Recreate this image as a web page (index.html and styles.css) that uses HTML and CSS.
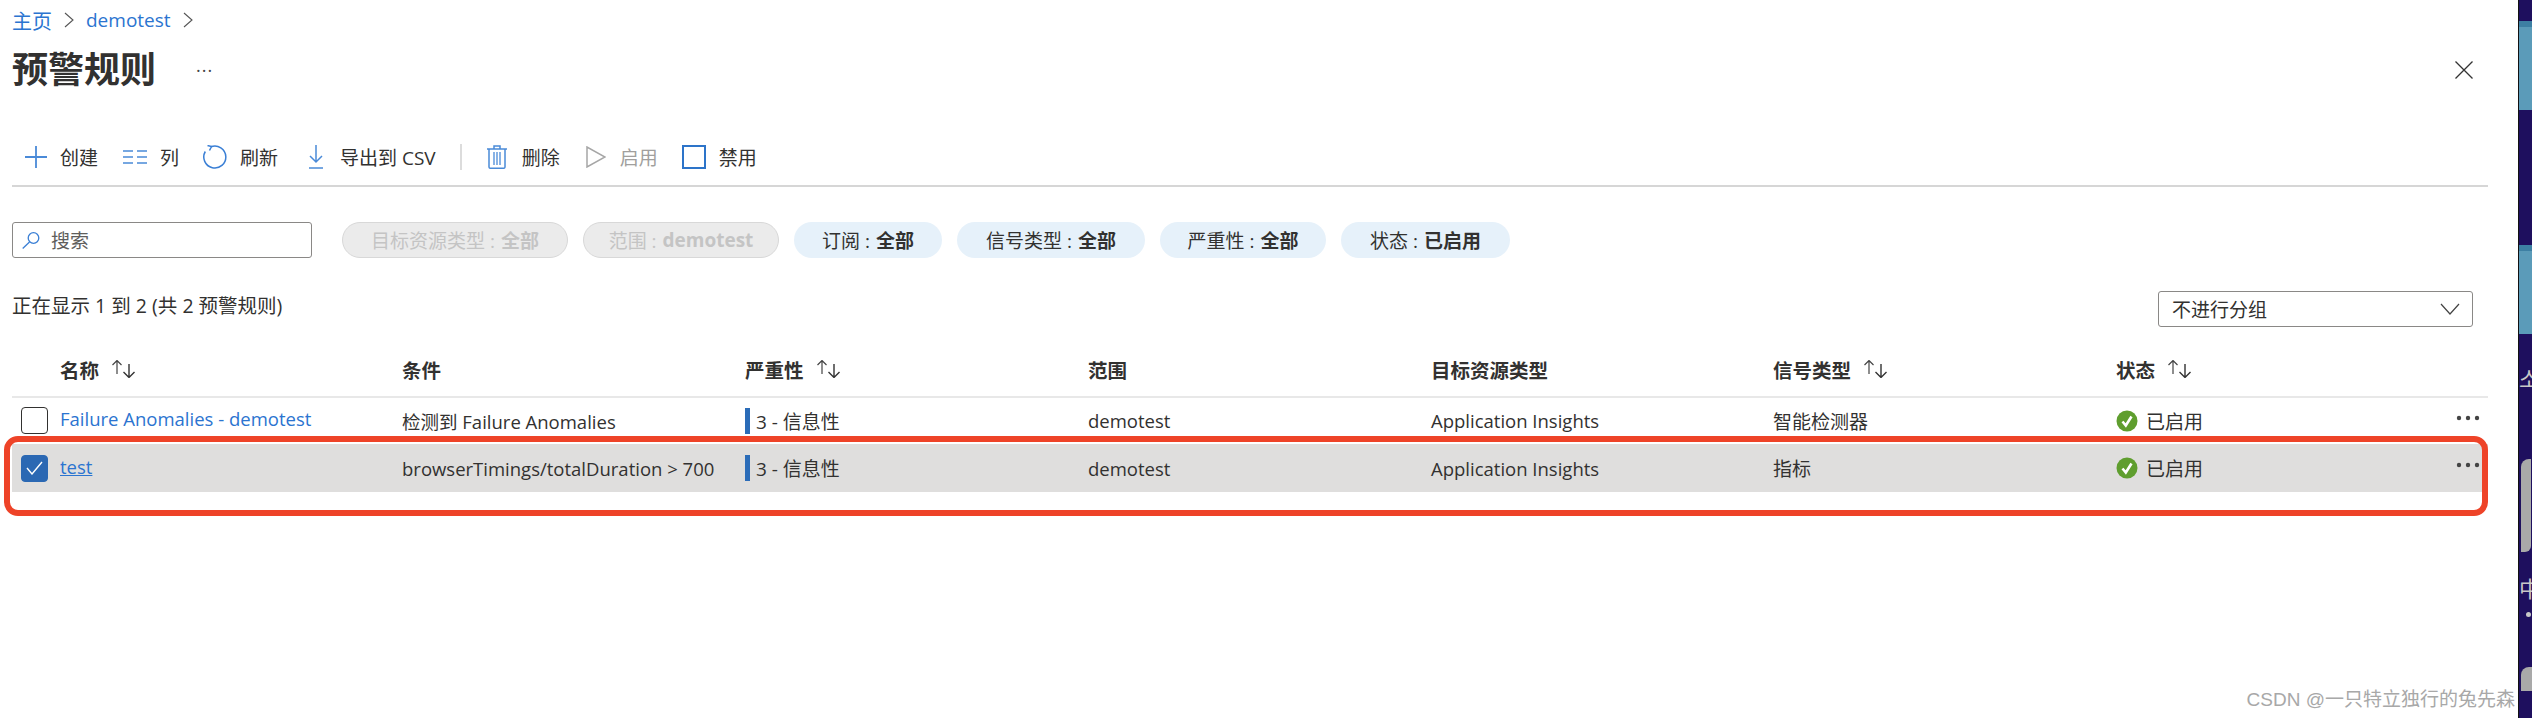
FILE: index.html
```html
<!DOCTYPE html>
<html lang="zh-CN">
<head>
  <meta charset="UTF-8" />
  <title>预警规则</title>
  <link rel="stylesheet" href="styles.css">
</head>
<body>
  <svg class="defs" width="0" height="0">
    <symbol id="sort" viewBox="0 0 24 18">
      <path d="M6 14V0.5M1.5 5L6 0.5L10.500 5" fill="none" stroke="#444" stroke-width="1.2"/>
      <path d="M18 4V17.500M12.500 12L18 17.500L23.500 12" fill="none" stroke="#333" stroke-width="1.400"/>
    </symbol>
    <symbol id="check" viewBox="0 0 22 22">
      <circle cx="11" cy="11" r="10.500" fill="#5f9e2e"/>
      <path d="M6.500 11.500L9.800 15.500L15.500 6.500" fill="none" stroke="#fff" stroke-width="2.600"/>
    </symbol>
    <symbol id="dots" viewBox="0 0 24 6">
      <circle cx="3" cy="3" r="2.200" fill="#444"/>
      <circle cx="12" cy="3" r="2.200" fill="#444"/>
      <circle cx="21" cy="3" r="2.200" fill="#444"/>
    </symbol>
  </svg>

  <main class="panel">
    <nav class="crumbs">
      <a href="#">主页</a>
      <svg class="chev" width="10" height="16" viewBox="0 0 10 16"><path d="M1 1L9 8L1 15" fill="none" stroke="#555" stroke-width="1.100"/></svg>
      <a class="crumb-app" href="#">demotest</a>
      <svg class="chev" width="10" height="16" viewBox="0 0 10 16"><path d="M1 1L9 8L1 15" fill="none" stroke="#555" stroke-width="1.100"/></svg>
    </nav>

    <header class="title-row">
      <h1>预警规则</h1>
      <span class="title-more">...</span>
      <svg class="close" width="18" height="18" viewBox="0 0 18 18"><path d="M0.500 0.500L17.500 17.500M17.500 0.500L0.500 17.500" stroke="#333" stroke-width="1.300"/></svg>
    </header>

    <div class="toolbar">
      <button class="tool t-create">
        <svg width="22" height="22" viewBox="0 0 22 22"><path d="M11 0V22M0 11H22" stroke="#4a8ad8" stroke-width="1.800"/></svg>
        创建
      </button>
      <button class="tool t-cols">
        <svg width="24" height="14" viewBox="0 0 24 14"><path d="M0 1H10M14 1H24M0 7H10M14 7H24M0 13H10M14 13H24" stroke="#4a8ad8" stroke-width="1.600"/></svg>
        列
      </button>
      <button class="tool t-refresh">
        <svg width="24" height="24" viewBox="0 0 24 24"><path d="M8 1.700A11 11 0 1 1 2.300 6.500" fill="none" stroke="#3a7fd5" stroke-width="1.500"/><path d="M4.500 0.500L8.500 1.600L6.500 5.500" fill="none" stroke="#3a7fd5" stroke-width="1.500"/></svg>
        刷新
      </button>
      <button class="tool t-export">
        <svg width="14" height="24" viewBox="0 0 14 24"><path d="M7 0V17M1 11L7 17L13 11M0 23H14" fill="none" stroke="#4a8ad8" stroke-width="1.500"/></svg>
        导出到 CSV
      </button>
      <span class="tool-sep"></span>
      <button class="tool t-delete">
        <svg width="20" height="24" viewBox="0 0 20 24"><path d="M0 4H20M7 4V1H13V4M2 4V22Q2 23.300 3.500 23.300H16.500Q18 23.300 18 22V4" fill="none" stroke="#4a8ad8" stroke-width="1.500"/><path d="M7 7V20M10 7V20M13 7V20" stroke="#4a8ad8" stroke-width="1.300"/></svg>
        删除
      </button>
      <button class="tool t-enable is-off">
        <svg width="20" height="22" viewBox="0 0 20 22"><path d="M1 1V21L19 11Z" fill="none" stroke="#a6a6a6" stroke-width="1.500"/></svg>
        启用
      </button>
      <button class="tool t-disable">
        <span class="stop-box"></span>
        禁用
      </button>
    </div>

    <div class="filters">
      <label class="search">
        <svg width="18" height="17" viewBox="0 0 18 17"><circle cx="11.500" cy="6" r="5.300" fill="none" stroke="#3a7fd5" stroke-width="1.300"/><path d="M7.500 10L0.700 16.500" stroke="#3a7fd5" stroke-width="1.300"/></svg>
        <span>搜索</span>
      </label>
      <span class="pill pill-off p1">目标资源类型 : <b>全部</b></span>
      <span class="pill pill-off p2">范围 : <b>demotest</b></span>
      <span class="pill p3">订阅 : <b>全部</b></span>
      <span class="pill p4">信号类型 : <b>全部</b></span>
      <span class="pill p5">严重性 : <b>全部</b></span>
      <span class="pill p6">状态 : <b>已启用</b></span>
    </div>

    <div class="summary-row">
      <span class="summary">正在显示 1 到 2 (共 2 预警规则)</span>
      <div class="group-select">
        <span>不进行分组</span>
        <svg width="20" height="12" viewBox="0 0 20 12"><path d="M1 1L10 11L19 1" fill="none" stroke="#444" stroke-width="1.200"/></svg>
      </div>
    </div>

    <section class="rules">
      <div class="row head">
        <span></span>
        <span class="sortable">名称 <svg class="sort" width="24" height="18"><use href="#sort"/></svg></span>
        <span>条件</span>
        <span class="sortable">严重性 <svg class="sort" width="24" height="18"><use href="#sort"/></svg></span>
        <span>范围</span>
        <span>目标资源类型</span>
        <span class="sortable">信号类型 <svg class="sort" width="24" height="18"><use href="#sort"/></svg></span>
        <span class="sortable">状态 <svg class="sort" width="24" height="18"><use href="#sort"/></svg></span>
      </div>

      <div class="row item">
        <span class="box"></span>
        <a class="name latin" href="#">Failure Anomalies - demotest</a>
        <span class="latin">检测到 Failure Anomalies</span>
        <span class="sev">3 - 信息性</span>
        <span class="latin">demotest</span>
        <span class="latin">Application Insights</span>
        <span>智能检测器</span>
        <span class="state">
          <svg width="22" height="22"><use href="#check"/></svg>已启用
          <svg class="dots" width="24" height="6"><use href="#dots"/></svg>
        </span>
      </div>

      <div class="row item selected">
        <span class="box on">
          <svg width="17" height="14" viewBox="0 0 17 14"><path d="M1 7L6 13L16 1" fill="none" stroke="#fff" stroke-width="1.400"/></svg>
        </span>
        <a class="name under latin" href="#">test</a>
        <span class="latin">browserTimings/totalDuration &gt; 700</span>
        <span class="sev">3 - 信息性</span>
        <span class="latin">demotest</span>
        <span class="latin">Application Insights</span>
        <span>指标</span>
        <span class="state">
          <svg width="22" height="22"><use href="#check"/></svg>已启用
          <svg class="dots" width="24" height="6"><use href="#dots"/></svg>
        </span>
      </div>

      <!-- red marker drawn over the selected row -->
      <div class="marker"></div>
    </section>

    <div class="watermark">CSDN @一只特立独行的兔先森</div>
  </main>

  <aside class="edge">
    <div class="win w1"></div>
    <div class="win w2"></div>
    <div class="glyph g1">소</div>
    <div class="dock d1"></div>
    <div class="glyph g2">中</div>
    <div class="dot"></div>
    <div class="dock d2"></div>
  </aside>
</body>
</html>
```

FILE: styles.css
```css
html, body { margin: 0; height: 718px; overflow: hidden; }
body {
  display: flex; background: #fff; color: #323130;
  font-family: "Open Sans", "Noto Sans CJK SC", sans-serif; font-size: 19px;
}
a { color: #2b74d0; text-decoration: none; }
b { font-weight: 700; }
.latin { font-size: 18.500px; }
.defs { position: absolute; }

.panel { flex: 1; position: relative; padding: 0 30px 0 12px; min-width: 0; }

.crumbs { display: flex; align-items: center; height: 20px; padding-top: 10px; font-size: 20px; }
.crumb-app { font-size: 19px; }
.chev { margin: 0 12px; }

.title-row { display: flex; align-items: center; height: 40px; margin-top: 20px; position: relative; }
h1 { margin: 0; font-size: 36px; font-weight: 700; line-height: 40px; color: #323130; }
.title-more { margin: -10px 0 0 40px; font-size: 18px; line-height: 18px; letter-spacing: 1px; color: #444; }
.close { position: absolute; right: 15px; top: 11px; }

.toolbar {
  display: flex; align-items: center; height: 57px; margin-top: 38px;
  padding-left: 13px; border-bottom: 2px solid #d6d6d6;
}
.tool {
  display: flex; align-items: center; gap: 13px; padding: 0; border: none; background: none;
  font: inherit; color: #323130;
}
.t-cols { margin-left: 25px; }
.t-refresh { margin-left: 24px; }
.t-export { margin-left: 31px; gap: 17px; }
.tool-sep { width: 2px; height: 26px; margin-left: 24px; background: #dcdcdc; }
.t-delete { margin-left: 25px; gap: 15px; }
.t-enable { margin-left: 26px; gap: 14px; }
.t-disable { margin-left: 24px; }
.is-off { color: #a19f9d; }
.stop-box { width: 24px; height: 24px; box-sizing: border-box; border: 2px solid #2d74c9; }

.filters { display: flex; align-items: center; gap: 15px; margin-top: 35px; }
.search {
  display: flex; align-items: center; gap: 11px; width: 300px; height: 36px; box-sizing: border-box;
  padding-left: 9px; margin-right: 15px; border: 1.500px solid #8a8886; border-radius: 3px; color: #605e5c;
}
.pill {
  display: flex; align-items: center; justify-content: center; gap: 1px; height: 36px; box-sizing: border-box;
  border-radius: 18px; background: #e6f1fa; color: #323130; white-space: pre;
}
.pill-off { background: #ebebeb; border: 1.500px solid #d8d8d8; color: #c4c4c4; }
.p1 { width: 226px; }
.p2 { width: 196px; }
.p3 { width: 148px; }
.p4 { width: 188px; }
.p5 { width: 166px; }
.p6 { width: 169px; }

.summary-row { display: flex; justify-content: space-between; margin-top: 33px; height: 36px; }
.summary { line-height: 30px; font-size: 19.500px; }
.group-select {
  display: flex; align-items: center; justify-content: space-between; width: 315px; height: 36px;
  box-sizing: border-box; padding: 0 12px 0 13px; margin-right: 15px;
  border: 1.500px solid #8a8886; border-radius: 3px;
}

.rules { position: relative; margin-top: 21px; }
.row {
  display: grid; grid-template-columns: 48px 342px 343px 343px 343px 342px 343px 1fr;
  align-items: center;
}
.row > :first-child { margin-left: 9px; }
.head {
  height: 50px; border-bottom: 2px solid #e8e8e8; font-size: 19.500px; font-weight: 700;
  padding-bottom: 6px; box-sizing: border-box;
}
.sortable { display: flex; align-items: center; gap: 12px; }
.item { height: 46px; padding-bottom: 1px; box-sizing: border-box; }
.selected { height: 48px; padding-bottom: 0; background: #dfdedd; }

.box {
  display: flex; align-items: center; justify-content: center; width: 27px; height: 27px;
  box-sizing: border-box; border: 1.500px solid #323130; border-radius: 4px; background: #fff;
}
.box.on { background: #2b68b3; border-color: #2b68b3; }
.name { margin-top: -4px; }
.under { text-decoration: underline; }
.sev { display: flex; align-items: center; height: 26px; padding-left: 6px; border-left: 5px solid #2b6cb8; }
.state { display: flex; align-items: center; gap: 8px; position: relative; }
.dots { position: absolute; right: 8px; top: 8px; }

.marker {
  position: absolute; left: -8px; right: 0; top: 88px; height: 80px; box-sizing: border-box;
  border: 6px solid #ee4328; border-radius: 14px;
}

.watermark {
  position: absolute; right: 3px; bottom: 7px; font-size: 19px; color: #a8a8a8;
  font-family: "Liberation Sans", "Noto Sans CJK SC", sans-serif;
}

.edge {
  width: 14px; flex: none; background: #1e0f5e; border-left: 1px solid #111; box-sizing: border-box;
  display: flex; flex-direction: column; overflow: hidden;
}
.win { height: 89px; background: #5b9bb9; border-top: 6px solid #3d7fa3; box-sizing: border-box; }
.w1 { margin-top: 21px; }
.w2 { margin-top: 135px; }
.glyph { color: #c8c8c8; font-size: 22px; line-height: 24px; height: 24px; white-space: nowrap; }
.g1 { margin-top: 32px; }
.g2 { margin-top: 24px; }
.dock { background: #a9a9a9; border-radius: 0 0 0 8px; }
.d1 { height: 93px; margin-top: 69px; margin-left: 2px; width: 10px; border-radius: 8px 0 6px 0; }
.d2 { height: 24px; margin-top: 50px; margin-left: 2px; border-radius: 8px 0 0 0; }
.dot { width: 5px; height: 5px; margin: 12px 0 0 7px; border-radius: 50%; background: #c8c8c8; }
```
